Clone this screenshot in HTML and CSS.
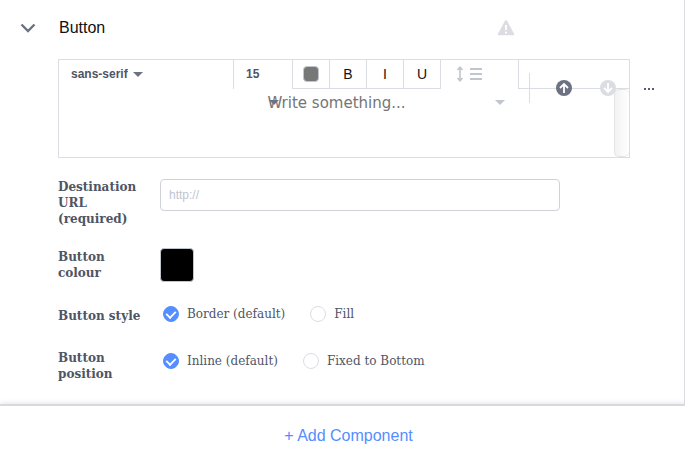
FILE: index.html
```html
<!DOCTYPE html>
<html lang="en">
  <head>
    <meta charset="utf-8" />
    <title>Button</title>
    <link rel="stylesheet" href="styles.css">
  </head>
  <body>
    <section class="component">
      <header class="component-header">
        <button class="icon-btn toggle" aria-label="Collapse">
          <svg width="16" height="16" viewBox="0 0 16 16" fill="none" stroke="#6c7283" stroke-width="2.4">
            <path d="M1.5 4.5 L8 11 L14.5 4.5" />
          </svg>
        </button>
        <h2>Button</h2>
        <svg class="warning" width="18" height="18" viewBox="0 0 18 18">
          <path d="M9 2 L16.2 15.2 H1.8 Z" fill="#dcdde3" stroke="#dcdde3" stroke-width="2" stroke-linejoin="round" />
          <path d="M9 6 V11" stroke="#fff" stroke-width="2" />
          <circle cx="9" cy="13.6" r="1.1" fill="#fff" />
        </svg>
      </header>

      <div class="component-body">
        <div class="editor">
          <div class="toolbar">
            <div class="tool tool-font">
              <select aria-label="Font">
                <option>sans-serif</option>
              </select>
              <span class="caret"></span>
            </div>
            <div class="tool tool-size">
              <select aria-label="Font size">
                <option>15</option>
              </select>
              <span class="caret caret-below"></span>
            </div>
            <div class="tool tool-small">
              <input class="text-colour" type="color" value="#777777" aria-label="Text colour">
            </div>
            <button class="tool tool-small">B</button>
            <button class="tool tool-small">I</button>
            <button class="tool tool-small">U</button>
            <div class="tool tool-spacing">
              <button class="icon-btn" aria-label="Line height">
                <svg width="26" height="16" viewBox="0 0 26 16" fill="none" stroke="#c1c5cd">
                  <path d="M4 2 V14 M1.5 4 L4 1.2 L6.5 4 M1.5 12 L4 14.8 L6.5 12" stroke-width="1.6" />
                  <path d="M14 3 H26 M14 8 H26 M14 13 H26" stroke-width="2" />
                </svg>
              </button>
              <span class="caret caret-below caret-light"></span>
            </div>
            <div class="tool tool-rest"></div>
          </div>
          <div class="editor-area">
            <textarea placeholder="Write something..." aria-label="Button text"></textarea>
            <div class="scrollbar"></div>
          </div>

          <div class="actions">
            <button class="icon-btn" aria-label="Move up">
              <svg width="16" height="16" viewBox="0 0 16 16" fill="none" stroke="#fff" stroke-width="1.8">
                <circle cx="8" cy="8" r="8" fill="#6c7283" stroke="none" />
                <path d="M8 13 V4 M4 8 L8 4 L12 8" />
              </svg>
            </button>
            <button class="icon-btn" aria-label="Move down">
              <svg width="16" height="16" viewBox="0 0 16 16" fill="none" stroke="#fff" stroke-width="1.8">
                <circle cx="8" cy="8" r="8" fill="#dcdde3" stroke="none" />
                <path d="M8 3 V12 M4 8 L8 12 L12 8" />
              </svg>
            </button>
            <button class="icon-btn" aria-label="More">
              <svg width="12" height="4" viewBox="0 0 12 4" fill="#565d6f">
                <rect x="0" y="2" width="2" height="2" />
                <rect x="4" y="2" width="2" height="2" />
                <rect x="8" y="2" width="2" height="2" />
              </svg>
            </button>
          </div>
        </div>

        <div class="row">
          <label class="row-label" for="url">Destination URL (required)</label>
          <input class="url" id="url" type="text" placeholder="http://">
        </div>
        <div class="row">
          <label class="row-label" for="colour">Button colour</label>
          <input class="colour" id="colour" type="color" value="#000000">
        </div>
        <div class="row" role="radiogroup" aria-labelledby="styleLabel">
          <span class="row-label" id="styleLabel">Button style</span>
          <div class="options">
            <label><input type="radio" name="style" checked>Border (default)</label>
            <label><input type="radio" name="style">Fill</label>
          </div>
        </div>
        <div class="row" role="radiogroup" aria-labelledby="positionLabel">
          <span class="row-label" id="positionLabel">Button position</span>
          <div class="options">
            <label><input type="radio" name="position" checked>Inline (default)</label>
            <label><input type="radio" name="position">Fixed to Bottom</label>
          </div>
        </div>
      </div>
    </section>

    <footer class="add">
      <button class="add-btn">+ Add Component</button>
    </footer>
  </body>
</html>
```

FILE: styles.css
```css
* {
  box-sizing: border-box;
}
body {
  margin: 0;
  background-color: #fff;
  color: #4f5565;
  font-family: "DejaVu Serif", serif;
  font-size: 12px;
  line-height: 16px;
}
button,
select,
input,
textarea {
  margin: 0;
  padding: 0;
  border: none;
  outline: none;
  background: none;
  font-family: "Liberation Sans", Arial, sans-serif;
}
button {
  cursor: pointer;
}
svg {
  display: block;
}

.component {
  border-right: 1px solid #dcdde3;
}
.component-header {
  display: flex;
  align-items: center;
  height: 59px;
  padding: 0 169px 4px 20px;
}
.component-header h2 {
  margin: 0 auto 0 23px;
  color: #111;
  font: 16px "Liberation Sans", Arial, sans-serif;
}
.component-body {
  display: flex;
  flex-direction: column;
  gap: 21px;
  padding: 0 54px 22px 58px;
}

.editor {
  position: relative;
  border: 1px solid #dcdde3;
}
.toolbar {
  display: flex;
  height: 29px;
}
.tool {
  position: relative;
  display: flex;
  align-items: center;
  padding-bottom: 1px;
  border-right: 1px solid #dcdde3;
}
.tool select {
  appearance: none;
  color: #4f5565;
  font-size: 12px;
  font-weight: bold;
}
.tool-font {
  flex: 0 0 175px;
  gap: 5px;
  padding-left: 12px;
}
.tool-size {
  flex: 0 0 59px;
  padding-left: 12px;
}
.tool-small {
  flex: 0 0 37px;
  justify-content: center;
  padding-bottom: 0;
  border-bottom: 1px solid #dcdde3;
  color: #111;
  font-size: 14px;
}
.tool-spacing {
  flex: 0 0 78px;
  padding-left: 15px;
}
.tool-rest {
  flex: 1;
  border-right: none;
  border-bottom: 1px solid #dcdde3;
}
.caret {
  border: 5px solid transparent;
  border-top-color: #6c7283;
  border-bottom: none;
}
/* carets that wrap under their tool */
.caret-below {
  position: absolute;
  top: 40px;
  right: 13px;
  z-index: 1;
}
.caret-light {
  border-top-color: #c1c5cd;
}
.text-colour {
  width: 16px;
  height: 16px;
}
.editor-area {
  display: flex;
  height: 68px;
}
.editor-area textarea {
  flex: 1;
  padding-top: 4px;
  overflow: hidden;
  resize: none;
  font: 15px/20px "DejaVu Sans", sans-serif;
  text-align: center;
}
.scrollbar {
  width: 15px;
  border: 1px solid #e4e4e6;
  border-right: none;
  border-radius: 5px;
  background: linear-gradient(to right, #f2f2f2, #fff);
}

.actions {
  position: absolute;
  top: 13px;
  left: calc(100% - 100px);
  display: flex;
  align-items: center;
  gap: 28px;
  height: 30px;
  padding-left: 26px;
  border-left: 1px solid #dcdde3;
}

.row {
  display: grid;
  grid-template-columns: 86px 1fr;
  column-gap: 16px;
  align-items: start;
  min-height: 26px;
}
.row-label {
  align-self: center;
  font-weight: bold;
}
.url {
  width: 100%;
  max-width: 400px;
  height: 32px;
  padding: 0 8px;
  border: 1px solid #d0d2d9;
  border-radius: 4px;
  font-size: 12px;
}
.url::placeholder {
  color: #c1c5cd;
}
input[type="color"] {
  appearance: none;
  cursor: pointer;
}
input[type="color"]::-webkit-color-swatch-wrapper {
  padding: 0;
}
input[type="color"]::-webkit-color-swatch {
  border: 1px solid #c1c5cd;
  border-radius: 4px;
}
.colour {
  width: 34px;
  height: 34px;
}
.options {
  display: flex;
  flex-wrap: wrap;
  gap: 25px;
  padding-left: 3px;
}
.options label {
  display: flex;
  align-items: center;
  gap: 8px;
  height: 22px;
}
.options input {
  display: grid;
  place-items: center;
  appearance: none;
  width: 16px;
  height: 16px;
  border: 1px solid #dcdde3;
  border-radius: 50%;
}
.options input:checked {
  border-color: #558eff;
  background-color: #558eff;
}
.options input:checked::before {
  content: "";
  width: 8px;
  height: 5px;
  margin-bottom: 2px;
  border: solid #fff;
  border-width: 0 0 2px 2px;
  transform: rotate(-45deg) scale(0.9);
}

.add {
  position: relative;
  display: flex;
  justify-content: center;
  padding: 20px 0;
  border-top: 2px solid #d8d8df;
  box-shadow: 0 -1px 5px rgba(0, 0, 0, 0.1);
}
.add-btn {
  padding-left: 12px;
  color: #558eff;
  font-size: 16px;
  line-height: 20px;
}
```
